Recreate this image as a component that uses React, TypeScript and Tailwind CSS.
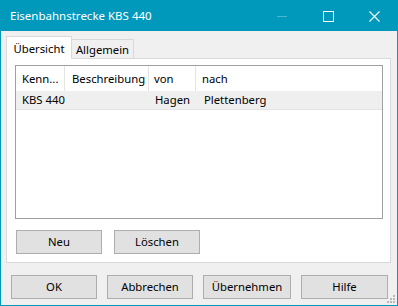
import React from "react";

const font = { fontFamily: '"Noto Sans", "Segoe UI", sans-serif' };

function Btn({ label, w }: { label: string; w: string }) {
  return (
    <div
      className={`${w} h-[24px] flex items-center justify-center border border-[#adadad] bg-[#e1e1e1] text-black whitespace-nowrap`}
    >
      {label}
    </div>
  );
}

export default function App() {
  return (
    <div
      className="w-[398px] h-[306px] border border-[#0099bc] bg-[#f0f0f0] flex flex-col overflow-hidden text-[11.3px] text-black leading-none whitespace-nowrap"
      style={font}
    >
      {/* Title bar */}
      <div className="h-[30px] bg-[#0099bc] flex items-center text-white shrink-0">
        <div className="pl-[9px] text-[11.5px] pb-[1px]">Eisenbahnstrecke KBS 440</div>
        <div className="flex-1" />
        <div className="w-[46px] h-[30px] flex items-center justify-center">
          <svg width="10" height="10" viewBox="0 0 10 10">
            <line x1="0" y1="5.5" x2="10" y2="5.5" stroke="#4cb6d1" strokeWidth="1" />
          </svg>
        </div>
        <div className="w-[46px] h-[30px] flex items-center justify-center">
          <svg width="11" height="11" viewBox="0 0 11 11">
            <rect x="0.5" y="0.5" width="10" height="10" fill="none" stroke="white" strokeWidth="1" />
          </svg>
        </div>
        <div className="w-[46px] h-[30px] flex items-center justify-center">
          <svg width="11" height="11" viewBox="0 0 11 11">
            <path d="M0.5 0.5 L10.5 10.5 M10.5 0.5 L0.5 10.5" stroke="white" strokeWidth="1.1" />
          </svg>
        </div>
      </div>

      {/* Body */}
      <div className="flex-1 flex flex-col pl-[5px] pt-[5px] relative">
        {/* Tabs */}
        <div className="flex items-end h-[23px] relative z-10 -mb-[1px]">
          <div className="h-[23px] w-[66px] bg-white border-l border-t border-r border-[#d9d9d9] flex items-center justify-center pt-[1px]">
            Übersicht
          </div>
          <div className="h-[20px] w-[62px] bg-[#f0f0f0] border-t border-r border-b border-[#d9d9d9] flex items-center justify-center pt-[2px]">
            Allgemein
          </div>
        </div>

        {/* Panel */}
        <div className="w-[385px] h-[205px] bg-white border border-[#d9d9d9] flex flex-col pl-[8px] pt-[6px]">
          {/* List */}
          <div className="w-[368px] h-[154px] border border-[#a0a0a0] bg-white flex flex-col">
            <div className="h-[25px] flex items-stretch">
              <div className="w-[49px] border-r border-[#e5e5e5] flex items-center pl-[6px]">Kenn...</div>
              <div className="w-[84px] border-r border-[#e5e5e5] flex items-center pl-[7px]">Beschreibung</div>
              <div className="w-[47px] border-r border-[#e5e5e5] flex items-center pl-[5px]">von</div>
              <div className="flex-1 flex items-center pl-[6px]">nach</div>
            </div>
            <div className="h-[19px] bg-[#efefef] border-b border-[#e3e3e3] flex items-center">
              <div className="w-[49px] pl-[6px]">KBS 440</div>
              <div className="w-[85px]"></div>
              <div className="w-[48px] pl-[5px]">Hagen</div>
              <div className="flex-1 pl-[6px]">Plettenberg</div>
            </div>
          </div>

          <div className="flex gap-[12px] mt-[11px] pl-[1px]">
            <Btn label="Neu" w="w-[86px]" />
            <Btn label="Löschen" w="w-[86px]" />
          </div>
        </div>

        {/* Bottom buttons */}
        <div className="flex mt-[12px] pl-[5px]">
          <Btn label="OK" w="w-[86px]" />
          <div className="w-[10px]" />
          <Btn label="Abbrechen" w="w-[86px]" />
          <div className="w-[10px]" />
          <Btn label="Übernehmen" w="w-[88px]" />
          <div className="w-[10px]" />
          <Btn label="Hilfe" w="w-[87px]" />
        </div>

        {/* Resize grip */}
        <svg className="absolute right-[1px] bottom-[1px]" width="10" height="10" viewBox="0 0 10 10">
          <rect x="7" y="1" width="2" height="2" fill="#b8b8b8" />
          <rect x="4" y="4" width="2" height="2" fill="#b8b8b8" />
          <rect x="7" y="4" width="2" height="2" fill="#b8b8b8" />
          <rect x="1" y="7" width="2" height="2" fill="#b8b8b8" />
          <rect x="4" y="7" width="2" height="2" fill="#b8b8b8" />
          <rect x="7" y="7" width="2" height="2" fill="#b8b8b8" />
        </svg>
      </div>
    </div>
  );
}
